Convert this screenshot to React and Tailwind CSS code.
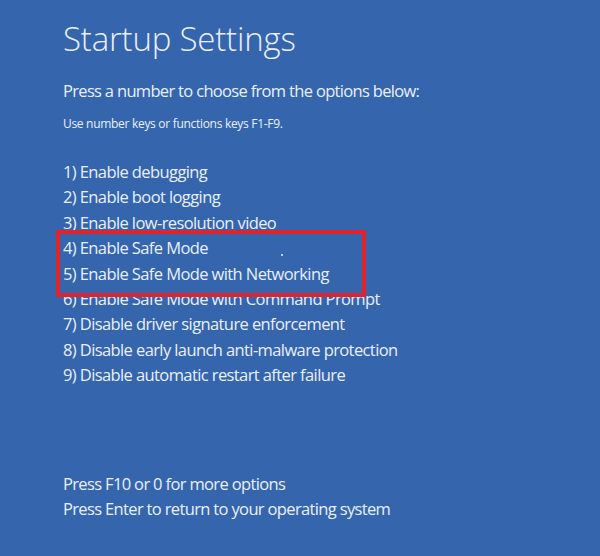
export default function App() {
  const options = [
    '1) Enable debugging',
    '2) Enable boot logging',
    '3) Enable low-resolution video',
    '4) Enable Safe Mode',
    '5) Enable Safe Mode with Networking',
    '6) Enable Safe Mode with Command Prompt',
    '7) Disable driver signature enforcement',
    '8) Disable early launch anti-malware protection',
    '9) Disable automatic restart after failure',
  ];

  return (
    <div className="w-[600px] h-[556px] bg-[#3465ad] text-[#eaf0f9] font-['Open_Sans',sans-serif] pl-[63px] pt-[14px] flex flex-col overflow-hidden">
      <h1 className="text-[33px] font-light leading-[50px] tracking-[-0.2px]">Startup Settings</h1>
      <p className="mt-[14px] text-[16.5px] leading-[26px] tracking-[-0.68px]">Press a number to choose from the options below:</p>
      <p className="mt-[11px] text-[12px] leading-[18px] tracking-[-0.3px]">Use number keys or functions keys F1-F9.</p>

      <div className="relative mt-[26px]">
        <ul className="flex flex-col">
          {options.map((o) => (
            <li key={o} className="text-[16.5px] leading-[25.4px] tracking-[-0.6px]">{o}</li>
          ))}
        </ul>
        <div className="absolute left-[-7px] top-[71px] w-[310px] h-[67px] border-[4px] border-[#e0232c]" />
        <div className="absolute left-[218px] top-[95px] w-[2px] h-[2px] bg-[#eaf0f9] rounded-full" />
      </div>

      <div className="mt-[83px] flex flex-col">
        <p className="text-[16.5px] leading-[25.4px] tracking-[-0.65px]">Press F10 or 0 for more options</p>
        <p className="text-[16.5px] leading-[25.4px] tracking-[-0.65px]">Press Enter to return to your operating system</p>
      </div>
    </div>
  );
}
